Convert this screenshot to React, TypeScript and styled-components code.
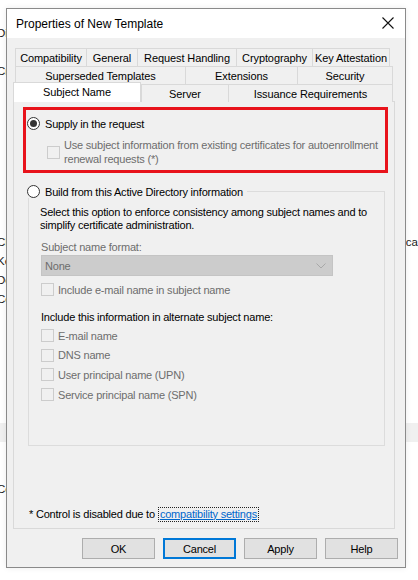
import React from "react";
import styled, { createGlobalStyle } from "styled-components";

const GlobalStyle = createGlobalStyle`
  html, body { margin: 0; padding: 0; background: #fff; }
  * { box-sizing: border-box; }
`;

const FONT = `"Liberation Sans", Arial, sans-serif`;
const FS = "11px";

const Desktop = styled.div`
  position: relative;
  width: 418px;
  height: 580px;
  overflow: hidden;
  background: #fff;
  font-family: ${FONT};
  font-size: ${FS};
  letter-spacing: -0.2px;
  color: #000;
  white-space: nowrap;
`;

/* list behind the dialog */
const Backdrop = styled.div`
  display: flex;
  flex-direction: column;
  padding-top: 23.5px;
`;

const BackRow = styled.div<{ $selected?: boolean }>`
  height: 19px;
  display: flex;
  align-items: center;
  justify-content: space-between;
  background: ${(p) => (p.$selected ? "#f0f0f0" : "transparent")};
  font-size: 11.5px;
  letter-spacing: 0;
  color: #1a1a1a;
  overflow: hidden;
`;

const BackLeft = styled.span`
  margin-left: -3px;
`;

const BackRight = styled.span`
  width: 12px;
  overflow: hidden;
  display: flex;
  justify-content: flex-end;
`;

/* dialog window */
const Window = styled.div`
  position: absolute;
  left: 6px;
  top: 8px;
  width: 400px;
  height: 560px;
  border: 1px solid #8a8a8a;
  background: #f0f0f0;
  display: flex;
  flex-direction: column;
  box-shadow: 0 0 6px rgba(0, 0, 0, 0.08);
`;

const TitleBar = styled.div`
  height: 29px;
  background: #fff;
  display: flex;
  align-items: center;
  justify-content: space-between;
  padding: 0 9px 0 9px;
  flex-shrink: 0;
`;

const Title = styled.span`
  font-size: 12px;
  letter-spacing: 0;
  color: #000;
  padding-top: 1px;
`;

const CloseButton = styled.div`
  width: 14px;
  height: 14px;
  display: flex;
  align-items: center;
  justify-content: center;
  margin-right: 1px;
  margin-top: -2px;
`;

const Body = styled.div`
  flex: 1;
  display: flex;
  flex-direction: column;
  padding: 10px 7px 0 6px;
`;

const TabRows = styled.div`
  display: flex;
  flex-direction: column;
  margin: 0 2px;
  position: relative;
  z-index: 1;
`;

const TabRow = styled.div`
  display: flex;
  height: 18px;
`;

const Tab = styled.div<{ $w: number; $last?: boolean; $active?: boolean }>`
  width: ${(p) => p.$w}px;
  height: ${(p) => (p.$active ? "20px" : "18px")};
  margin-top: ${(p) => (p.$active ? "-2px" : "0")};
  margin-left: ${(p) => (p.$active ? "-2px" : "0")};
  border-top: 1px solid #d9d9d9;
  border-left: 1px solid #d9d9d9;
  border-right: ${(p) => (p.$last || p.$active ? "1px solid #d9d9d9" : "none")};
  background: ${(p) => (p.$active ? "#fff" : "#f0f0f0")};
  display: flex;
  align-items: center;
  padding-bottom: ${(p) => (p.$active ? "1px" : "0")};
  justify-content: center;
  font-size: ${FS};
  letter-spacing: -0.1px;
  flex-shrink: 0;
`;

const Panel = styled.div`
  height: 428px;
  margin-top: -1px;
  margin-right: 3px;
  border: 1px solid #d9d9d9;
  background: #f0f0f0;
  display: flex;
  flex-direction: column;
`;

const Highlight = styled.div`
  margin: 5px 6px 0 9px;
  height: 66px;
  border: 3px solid #e8131b;
  padding: 7px 0 0 1px;
  display: flex;
  flex-direction: column;
`;

const RadioRow = styled.label`
  display: flex;
  align-items: center;
  height: 13px;
  gap: 5px;
  font-size: ${FS};
`;

const RadioCircle = styled.span<{ $checked?: boolean }>`
  width: 13px;
  height: 13px;
  border-radius: 50%;
  border: 1px solid #333;
  background: #fff;
  display: flex;
  align-items: center;
  justify-content: center;
  flex-shrink: 0;
  &::after {
    content: "";
    display: ${(p) => (p.$checked ? "block" : "none")};
    width: 7px;
    height: 7px;
    border-radius: 50%;
    background: #333;
  }
`;

const CheckBox = styled.span`
  width: 13px;
  height: 13px;
  border: 1px solid #cccccc;
  background: #f0f0f0;
  flex-shrink: 0;
`;

const WrapCheckRow = styled.div`
  display: flex;
  align-items: center;
  gap: 4px;
  margin: 8px 0 0 20px;
`;

const DisabledText = styled.span`
  color: #6d6d6d;
  font-size: ${FS};
  line-height: 14px;
`;

const GroupBox = styled.div`
  margin: 18px 9px 0 14px;
  height: 255px;
  border: 1px solid #dcdcdc;
  padding: 0 0 0 11px;
  display: flex;
  flex-direction: column;
`;

const GroupHeader = styled.div`
  margin: -7px 0 0 -13px;
  align-self: flex-start;
  background: #f0f0f0;
  padding-right: 4px;
`;

const Description = styled.div`
  margin-top: 8px;
  font-size: ${FS};
  line-height: 13px;
`;

const FieldLabel = styled.div<{ $disabled?: boolean }>`
  margin-top: ${(p) => (p.$disabled ? "8px" : "14px")};
  margin-left: 1px;
  font-size: ${FS};
  line-height: 14px;
  color: ${(p) => (p.$disabled ? "#6d6d6d" : "#000")};
`;

const Combo = styled.div`
  margin: 1px 0 0 1px;
  width: 292px;
  height: 21px;
  background: #cccccc;
  border: 1px solid #c4c4c4;
  display: flex;
  align-items: center;
  justify-content: space-between;
  padding: 0 6px 0 3px;
  color: #6d6d6d;
  font-size: ${FS};
`;

const CheckRow = styled.div<{ $h?: number }>`
  display: flex;
  align-items: center;
  gap: 4px;
  height: ${(p) => p.$h ?? 19.6}px;
  margin-left: 1px;
`;

const CheckList = styled.div<{ $top: number }>`
  display: flex;
  flex-direction: column;
  margin-top: ${(p) => p.$top}px;
`;

const Footer = styled.div`
  margin: auto 0 6px 15px;
  display: flex;
  align-items: center;
  height: 16px;
  font-size: ${FS};
`;

const Link = styled.span`
  color: #0066cc;
  text-decoration: underline;
  border: 1px dotted #222;
  padding: 0 1px;
  margin-left: 3px;
  line-height: 13px;
`;

const ButtonRow = styled.div`
  display: flex;
  justify-content: flex-end;
  gap: 8px;
  margin-top: 9px;
`;

const Button = styled.div<{ $default?: boolean }>`
  width: 73px;
  height: 21px;
  background: #e1e1e1;
  border: ${(p) => (p.$default ? "2px solid #0078d7" : "1px solid #adadad")};
  display: flex;
  align-items: center;
  justify-content: center;
  font-size: ${FS};
  color: #000;
`;

const Chevron = () => (
  <svg width="10" height="6" viewBox="0 0 10 6">
    <path d="M0.5 0.5 L5 5 L9.5 0.5" fill="none" stroke="#a8a8a8" strokeWidth="1" />
  </svg>
);

const CloseIcon = () => (
  <svg width="12" height="12" viewBox="0 0 12 12">
    <path d="M0.5 0.5 L11.5 11.5 M11.5 0.5 L0.5 11.5" stroke="#111" strokeWidth="1.1" />
  </svg>
);

const backRows: { left?: string; right?: string; selected?: boolean }[] = [
  { left: "Directory Email Replication" },
  {},
  { left: "Cross Certification Authority" },
  {}, {}, {}, {}, {}, {}, {}, {},
  { left: "CEP Encryption", right: "ica" },
  { left: "Key Recovery Agent" },
  { left: "Domain Controller" },
  { left: "Code Signing" },
  {}, {}, {}, {}, {}, {},
  { selected: true },
  {}, {},
  { left: "Computer" },
];

const tabRow1 = [
  { label: "Compatibility", w: 71 },
  { label: "General", w: 51 },
  { label: "Request Handling", w: 99 },
  { label: "Cryptography", w: 76 },
  { label: "Key Attestation", w: 78 },
];
const tabRow2 = [
  { label: "Superseded Templates", w: 170 },
  { label: "Extensions", w: 112 },
  { label: "Security", w: 96 },
];
const tabRow3 = [
  { label: "Subject Name", w: 128, active: true },
  { label: "Server", w: 87 },
  { label: "Issuance Requirements", w: 165 },
];

const altNames = [
  "E-mail name",
  "DNS name",
  "User principal name (UPN)",
  "Service principal name (SPN)",
];

export default function App() {
  return (
    <>
      <GlobalStyle />
      <Desktop>
        <Backdrop>
          {backRows.map((r, i) => (
            <BackRow key={i} $selected={r.selected}>
              <BackLeft>{r.left ?? ""}</BackLeft>
              <BackRight>{r.right ?? ""}</BackRight>
            </BackRow>
          ))}
        </Backdrop>

        <Window>
          <TitleBar>
            <Title>Properties of New Template</Title>
            <CloseButton>
              <CloseIcon />
            </CloseButton>
          </TitleBar>
          <Body>
            <TabRows>
              {[tabRow1, tabRow2, tabRow3].map((row, ri) => (
                <TabRow key={ri}>
                  {row.map((t, i) => (
                    <Tab
                      key={t.label}
                      $w={t.w}
                      $last={i === row.length - 1}
                      $active={(t as { active?: boolean }).active}
                    >
                      {t.label}
                    </Tab>
                  ))}
                </TabRow>
              ))}
            </TabRows>
            <Panel>
              <Highlight>
                <RadioRow>
                  <RadioCircle $checked />
                  Supply in the request
                </RadioRow>
                <WrapCheckRow>
                  <CheckBox />
                  <DisabledText>
                    Use subject information from existing certificates for autoenrollment
                    <br />
                    renewal requests (*)
                  </DisabledText>
                </WrapCheckRow>
              </Highlight>

              <GroupBox>
                <GroupHeader>
                  <RadioRow>
                    <RadioCircle />
                    Build from this Active Directory information
                  </RadioRow>
                </GroupHeader>
                <Description>
                  Select this option to enforce consistency among subject names and to
                  <br />
                  simplify certificate administration.
                </Description>
                <FieldLabel $disabled>Subject name format:</FieldLabel>
                <Combo>
                  <span>None</span>
                  <Chevron />
                </Combo>
                <CheckList $top={7}>
                  <CheckRow $h={13}>
                    <CheckBox />
                    <DisabledText>Include e-mail name in subject name</DisabledText>
                  </CheckRow>
                </CheckList>
                <FieldLabel>Include this information in alternate subject name:</FieldLabel>
                <CheckList $top={2}>
                  {altNames.map((n) => (
                    <CheckRow key={n}>
                      <CheckBox />
                      <DisabledText>{n}</DisabledText>
                    </CheckRow>
                  ))}
                </CheckList>
              </GroupBox>

              <Footer>
                * Control is disabled due to
                <Link>compatibility settings</Link>
              </Footer>
            </Panel>
            <ButtonRow>
              <Button>OK</Button>
              <Button $default>Cancel</Button>
              <Button>Apply</Button>
              <Button>Help</Button>
            </ButtonRow>
          </Body>
        </Window>
      </Desktop>
    </>
  );
}
